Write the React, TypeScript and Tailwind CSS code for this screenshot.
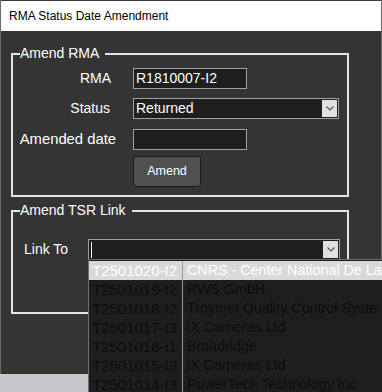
import React from "react";

const ui = { fontFamily: '"Liberation Sans", Arial, sans-serif' };

const rows = [
  { id: "T2501020-I2", name: "CNRS - Center National De La" },
  { id: "T2501019-I2", name: "RWS GmbH" },
  { id: "T2501018-I2", name: "Troymet Quality Control Syste" },
  { id: "T2501017-I3", name: "iX Cameras Ltd" },
  { id: "T2501016-I1", name: "Broadridge" },
  { id: "T2501015-I3", name: "iX Cameras Ltd" },
  { id: "T2501014-I3", name: "PowerTech Technology Inc" },
];

const Chevron = () => (
  <svg width="8" height="5" viewBox="0 0 8 5">
    <path d="M0.5 0.5 L4 4 L7.5 0.5" fill="none" stroke="#505050" strokeWidth="1.1" />
  </svg>
);

const DropButton = () => (
  <div className="w-[15px] h-full bg-[#e1e1e1] flex items-center justify-center">
    <Chevron />
  </div>
);

const TextBox = ({ value, width }: { value?: string; width: string }) => (
  <div className={`${width} h-[21px] border border-[#a0a0a0] bg-[#1e1e1e] text-white text-[14px] leading-[19px] pl-[2px]`}>
    {value}
  </div>
);

const App = () => {
  return (
    <div className="w-[382px] h-[392px] bg-[#c8c8cc] overflow-hidden relative" style={ui}>
      <div className="h-[374px] bg-[#343434] border-x border-[#6a6a6a] flex flex-col">
        {/* title bar */}
        <div className="h-[31px] bg-white border-t border-[#3a3a3a] flex items-center pl-[8px] text-[12px] text-black shrink-0">
          RMA Status Date Amendment
        </div>

        {/* Amend RMA */}
        <fieldset className="ml-[10px] mt-[14px] w-[338px] border-2 border-[#e4e4e4] pt-[6px] pb-[8px] text-white">
          <legend className="ml-[7px] pr-[6px] text-[14px] leading-[17px]">Amend RMA</legend>

          <div className="flex flex-col">
            <div className="flex items-center">
              <div className="w-[120px] text-right pr-[22px] text-[14px]">RMA</div>
              <TextBox value="R1810007-I2" width="w-[114px]" />
            </div>

            <div className="flex items-center mt-[9px]">
              <div className="w-[120px] text-right pr-[23px] text-[14px]">Status</div>
              <div className="w-[206px] h-[21px] border border-[#a0a0a0] bg-[#1e1e1e] flex items-stretch">
                <div className="flex-1 text-[14px] leading-[19px] pl-[2px]">Returned</div>
                <div className="py-[1px] pr-[1px]">
                  <DropButton />
                </div>
              </div>
            </div>

            <div className="flex items-center mt-[9px]">
              <div className="w-[120px] text-right pr-[17px] text-[14.8px] whitespace-nowrap">Amended date</div>
              <TextBox width="w-[114px]" />
            </div>

            <div className="ml-[120px] mt-[6px]">
              <button className="w-[68px] h-[31px] bg-[#505050] border border-[#1a1a1a] rounded-[3px] text-white text-[12.5px]">
                Amend
              </button>
            </div>
          </div>
        </fieldset>

        {/* Amend TSR Link */}
        <fieldset className="ml-[10px] mt-[5px] w-[338px] border-2 border-[#e4e4e4] pt-[20px] pb-[52px] text-white">
          <legend className="ml-[7px] pr-[6px] text-[14px] leading-[17px]">Amend TSR Link</legend>

          <div className="flex items-center">
            <div className="w-[75px] pl-[11px] text-[14px]">Link To</div>
            <div className="relative w-[252px] h-[21px] border border-[#a0a0a0] bg-[#1e1e1e] flex items-stretch">
              <div className="flex-1 flex items-center pl-[2px]">
                <div className="w-px h-[16px] bg-white" />
              </div>
              <div className="py-[1px] pr-[1px]">
                <DropButton />
              </div>

              {/* open list */}
              <div className="absolute top-full left-[-1px] w-[296px] border border-[#6e6e6e] bg-[#1e1e1e] pt-[1px] z-10">
                {rows.map((r, i) => (
                  <div
                    key={r.id}
                    className={`flex h-[19px] leading-[19px] whitespace-nowrap ${
                      i === 0 ? "bg-[#d9d9d9] text-white" : "text-[#0c0c10]"
                    }`}
                  >
                    <div className="w-[94px] pl-[3px] border-r border-[#9a9a9a] shrink-0 text-[15px]">{r.id}</div>
                    <div className="pl-[4px] text-[14.3px]">{r.name}</div>
                  </div>
                ))}
              </div>
            </div>
          </div>
        </fieldset>
      </div>
    </div>
  );
};

export default App;
